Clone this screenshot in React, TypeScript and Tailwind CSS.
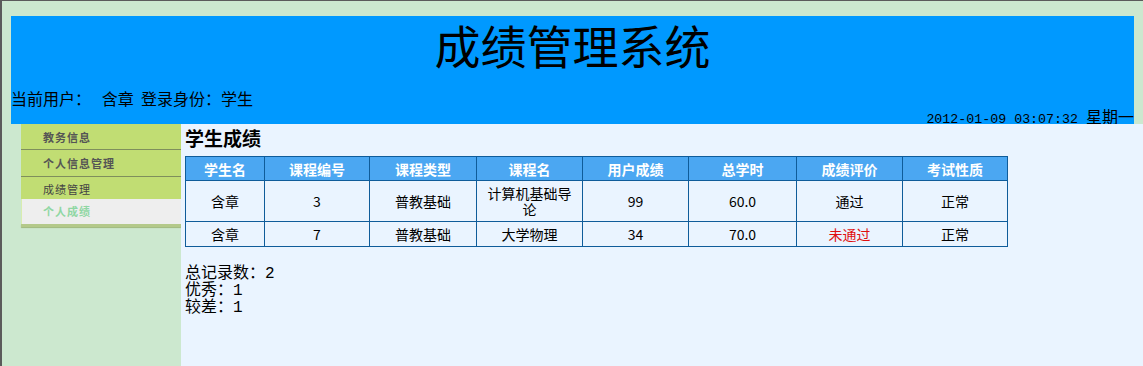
const cjk = "font-['Noto_Sans_CJK_SC',sans-serif]";

type Row = {
  name: string;
  no: string;
  type: string;
  course: string;
  score: string;
  hours: string;
  result: string;
  kind: string;
  failed?: boolean;
};

const rows: Row[] = [
  { name: "含章", no: "3", type: "普教基础", course: "计算机基础导论", score: "99", hours: "60.0", result: "通过", kind: "正常" },
  { name: "含章", no: "7", type: "普教基础", course: "大学物理", score: "34", hours: "70.0", result: "未通过", kind: "正常", failed: true },
];

const heads = ["学生名", "课程编号", "课程类型", "课程名", "用户成绩", "总学时", "成绩评价", "考试性质"];

function SideMenu() {
  return (
    <div className="w-[160px] text-[11px] tracking-[1px]">
      <div className="h-[26px] bg-[#c1dd73] border-b border-[#7f8f5c] pl-[22px] leading-[26px] font-bold text-[#555]">
        教务信息
      </div>
      <div className="h-[27px] bg-[#c1dd73] border-b border-[#7f8f5c] pl-[22px] leading-[27px] font-bold text-[#555]">
        个人信息管理
      </div>
      <div className="h-[22px] bg-[#c1dd73] pl-[22px] leading-[24px] text-[#444]">成绩管理</div>
      <div className="h-[25px] bg-[#eeeeee] border-l border-[#d8ecb0] pl-[21px] leading-[24px] font-bold text-[#8fd7a3]">
        个人成绩
      </div>
      <div className="h-[3px] bg-[#b4c98a] shadow-[0_1px_1px_#9fb77a]" />
    </div>
  );
}

export default function App() {
  return (
    <div className={`${cjk} h-[366px] w-full overflow-hidden bg-[#cce8cf] border-t border-l-2 border-[#5b5b5b] text-black`}>
      {/* header */}
      <div className="ml-[9px] mt-[15px] w-[1123px] h-[108px] bg-[#0099ff]">
        <div className="h-[54px] text-center text-[46px] leading-[56px]">成绩管理系统</div>
        <div className="mt-[18px] h-[20px] text-[16px] leading-[20px] whitespace-pre">当前用户：   含章  登录身份：学生</div>
        <div className="h-[16px] text-right leading-[16px] whitespace-pre">
          <span className="font-['Liberation_Mono',monospace] text-[13.3px]">2012-01-09 03:07:32 </span>
          <span className="text-[16px]">星期一</span>
        </div>
      </div>

      <div className="flex h-full">
        <div className="w-[179px] shrink-0 pl-[19px]">
          <SideMenu />
        </div>

        <div className="flex-1 bg-[#eaf4ff] pl-[4px]">
          <h2 className="pt-[2px] text-[19px] font-bold leading-[24px]">学生成绩</h2>
          <table className="mt-[6px] w-[823px] table-fixed border-collapse border border-[#0f5c9a] text-[14px]">
            <colgroup>
              <col className="w-[79px]" />
              <col className="w-[105px]" />
              <col className="w-[107px]" />
              <col className="w-[106px]" />
              <col className="w-[106px]" />
              <col className="w-[108px]" />
              <col className="w-[106px]" />
              <col className="w-[105px]" />
            </colgroup>
            <thead>
              <tr className="h-[24px] bg-[#4ba7f2]">
                {heads.map((h) => (
                  <th key={h} className="border border-[#0f5c9a] text-center font-bold text-white leading-[22px]">
                    {h}
                  </th>
                ))}
              </tr>
            </thead>
            <tbody>
              {rows.map((r, i) => (
                <tr key={i}>
                  {[r.name, r.no, r.type, r.course, r.score, r.hours].map((v, j) => (
                    <td key={j} className="border border-[#0f5c9a] px-[5px] py-[4px] text-center leading-[16px]">
                      {v}
                    </td>
                  ))}
                  <td className={`border border-[#0f5c9a] px-[5px] py-[4px] text-center leading-[16px] ${r.failed ? "text-[#e01010]" : ""}`}>
                    {r.result}
                  </td>
                  <td className="border border-[#0f5c9a] px-[5px] py-[4px] text-center leading-[16px]">{r.kind}</td>
                </tr>
              ))}
            </tbody>
          </table>

          <div className="mt-[19px] text-[16px] leading-[17px] font-['Liberation_Mono','Noto_Sans_CJK_SC',monospace]">
            <div>总记录数：2</div>
            <div>优秀：1</div>
            <div>较差：1</div>
          </div>
        </div>
      </div>
    </div>
  );
}
